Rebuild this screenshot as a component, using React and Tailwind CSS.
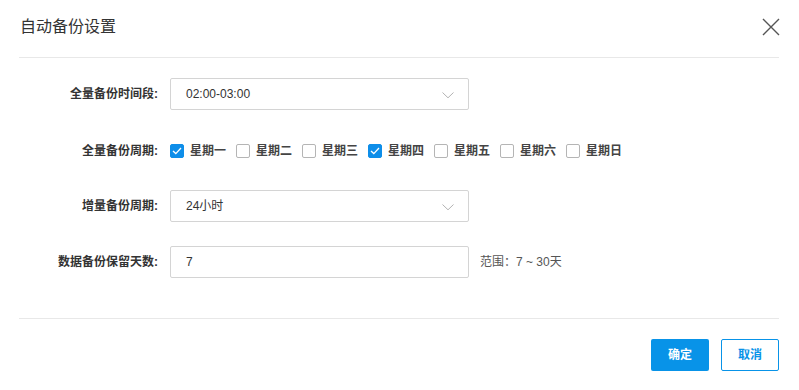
import { useState } from "react";

const days = ["星期一", "星期二", "星期三", "星期四", "星期五", "星期六", "星期日"];

function Chevron() {
  return (
    <svg width="12" height="7" viewBox="0 0 12 7" className="absolute right-[14px] top-[13px]">
      <path d="M0.5 0.5 L6 5.8 L11.5 0.5" fill="none" stroke="#b3b3b3" strokeWidth="1" />
    </svg>
  );
}

function Checkbox({ checked, label, onClick }) {
  return (
    <label onClick={onClick} className="flex items-center w-[66px] cursor-pointer select-none">
      <span
        className={
          checked
            ? "w-[14px] h-[14px] rounded-[2px] bg-[#0e8ee9] border border-[#0e8ee9] flex items-center justify-center"
            : "w-[14px] h-[14px] rounded-[2px] bg-white border border-[#b5b5b5]"
        }
      >
        {checked && (
          <svg width="10" height="8" viewBox="0 0 10 8">
            <path d="M1 4 L3.8 6.6 L9 1" fill="none" stroke="white" strokeWidth="1.3" />
          </svg>
        )}
      </span>
      <span className="ml-[6px] text-[12px] font-semibold text-[#444]">{label}</span>
    </label>
  );
}

function Row({ label, children, className = "" }) {
  return (
    <div className={"flex items-center h-[32px] " + className}>
      <div className="w-[151px] pr-[12px] text-right text-[12px] font-bold text-[#333]">{label}</div>
      {children}
    </div>
  );
}

export default function App() {
  const [checked, setChecked] = useState([true, false, false, true, false, false, false]);

  function toggle(i) {
    const next = [...checked];
    next[i] = !next[i];
    setChecked(next);
  }

  return (
    <div
      className="w-[799px] h-[390px] bg-white pl-[19px] pr-[20px] text-[#333]"
      style={{ fontFamily: '"Liberation Sans", "Noto Sans CJK SC", sans-serif' }}
    >
      <div className="h-[58px] border-b border-[#e8e8e8] flex items-center justify-between pl-[1px]">
        <h2 className="text-[16px] text-[#333] pb-[4px]">自动备份设置</h2>
        <button className="mr-[-1px] mb-[3px]">
          <svg width="18" height="18" viewBox="0 0 18 18">
            <path d="M1 1 L17 17 M17 1 L1 17" stroke="#555" strokeWidth="1.4" />
          </svg>
        </button>
      </div>

      <div className="pt-[20px] pb-[40px] flex flex-col gap-[24px] border-b border-[#e8e8e8]">
        <Row label="全量备份时间段:">
          <div className="relative w-[299px] h-[32px] border border-[#d4d4d4] rounded-[2px] flex items-center pl-[15px] text-[12px] text-[#333]">
            02:00-03:00
            <Chevron />
          </div>
        </Row>

        <Row label="全量备份周期:" className="mt-[1px] mb-[-1px]">
          <div className="flex items-center">
            {days.map((d, i) => (
              <Checkbox key={d} label={d} checked={checked[i]} onClick={() => toggle(i)} />
            ))}
          </div>
        </Row>

        <Row label="增量备份周期:">
          <div className="relative w-[299px] h-[32px] border border-[#d4d4d4] rounded-[2px] flex items-center pl-[15px] text-[12px] text-[#333]">
            24小时
            <Chevron />
          </div>
        </Row>

        <Row label="数据备份保留天数:">
          <div className="w-[299px] h-[32px] border border-[#d4d4d4] rounded-[2px] flex items-center pl-[15px] text-[12px] text-[#333]">
            7
          </div>
          <span className="ml-[11px] text-[12px] text-[#555]">范围：7 ~ 30天</span>
        </Row>
      </div>

      <div className="flex justify-end gap-[12px] pt-[20px]">
        <button className="w-[58px] h-[32px] rounded-[2px] bg-[#0893e8] text-white text-[12px] font-semibold">确定</button>
        <button className="w-[58px] h-[32px] rounded-[2px] border border-[#0893e8] text-[#0893e8] text-[12px] font-semibold">取消</button>
      </div>
    </div>
  );
}
